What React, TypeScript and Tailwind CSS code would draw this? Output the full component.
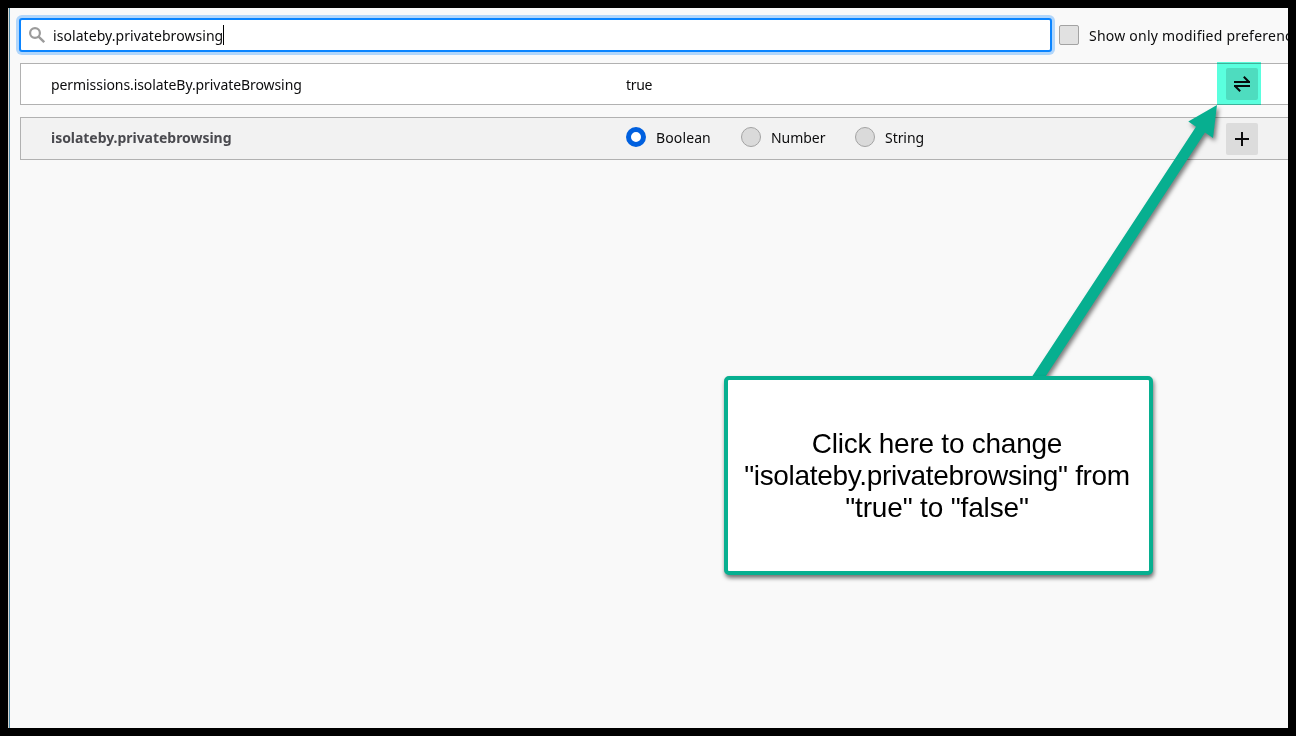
import React from "react";

const TYPES = [
  { label: "Boolean", checked: true, box: "w-[115px]", spacing: "tracking-[0.12px]" },
  { label: "Number", checked: false, box: "w-[114px]", spacing: "tracking-[-0.05px]" },
  { label: "String", checked: false, box: "w-[100px]", spacing: "tracking-[-0.05px]" },
];

function SearchIcon() {
  return (
    <svg className="h-4 w-4 shrink-0" viewBox="0 0 16 16" fill="none" stroke="#9b9b9b">
      <circle cx="6" cy="6" r="4.9" strokeWidth="2.2" />
      <path d="M9.6 9.6 15.2 15.2" strokeWidth="2.4" />
    </svg>
  );
}

function ToggleIcon() {
  return (
    <svg className="h-4 w-4" viewBox="0 0 16 16" fill="none" stroke="#0c0c0d" strokeWidth="2">
      <path d="M0 6H16M9.8 0.8 15 6M16 10H0M6.2 15.2 1 10" />
    </svg>
  );
}

function PlusIcon() {
  return (
    <svg className="h-4 w-4" viewBox="0 0 16 16" fill="none" stroke="#0c0c0d" strokeWidth="2">
      <path d="M1 8H15M8 1V15" />
    </svg>
  );
}

function Radio({ checked }: { checked: boolean }) {
  return checked ? (
    <span className="h-5 w-5 shrink-0 rounded-full border-[5px] border-[#0060df] bg-white" />
  ) : (
    <span className="h-5 w-5 shrink-0 rounded-full border border-[#a3a3a3] bg-[#dadada]" />
  );
}

export default function App() {
  return (
    <div className="relative h-[736px] w-[1296px] overflow-hidden border-8 border-black bg-[#f9f9f9] font-['Noto_Sans',sans-serif] text-[14px] leading-5 text-[#0c0c0d]">
      <div className="flex h-full">
        <div className="w-px shrink-0 bg-[#d8d4cc]" />
        <div className="w-px shrink-0 bg-[#4b89a8]" />
        <main className="min-w-0 flex-1 overflow-hidden">
          <div className="flex items-start pt-[10px] pl-[9px]">
            <div className="flex h-[34px] w-[1033px] shrink-0 items-center rounded-[3px] border-2 border-[#0a84ff] bg-white pl-2 shadow-[0_0_0_3px_rgba(10,132,255,0.3)]">
              <SearchIcon />
              <span className="ml-2 pt-[2px] tracking-[0.065px] whitespace-nowrap">isolateby.privatebrowsing</span>
              <span className="h-5 w-px bg-black" />
            </div>
            <span className="mt-[7px] ml-[7px] h-5 w-5 shrink-0 rounded-[2px] border border-[#a3a3a3] bg-[#e1e1e1]" />
            <span className="mt-2 ml-[10px] tracking-[0.23px] whitespace-nowrap">Show only modified preferences</span>
          </div>

          <div className="mt-[11px] ml-[10px] flex h-[42px] items-center border-y border-l border-[#b1b1b1] bg-white">
            <span className="w-[575px] shrink-0 pt-[2px] pl-[30px] tracking-[-0.075px]">permissions.isolateBy.privateBrowsing</span>
            <span className="w-[630px] shrink-0 pt-[2px] pl-[30px] tracking-[-0.3px]">true</span>
            <button className="flex h-8 w-8 shrink-0 items-center justify-center rounded-[2px] bg-[#dcdcdc]">
              <ToggleIcon />
            </button>
          </div>

          <div className="mt-3 ml-[10px] flex h-[43px] items-center border-y border-l border-[#b1b1b1] bg-[#f2f2f2]">
            <span className="w-[605px] shrink-0 pb-[2px] pl-[30px] font-bold tracking-[-0.04px] text-[#4a4a4f]">isolateby.privatebrowsing</span>
            <div className="flex w-[600px] shrink-0 pb-[3px]">
              {TYPES.map((t) => (
                <label key={t.label} className={`flex h-5 items-center gap-[10px] ${t.box} ${t.spacing}`}>
                  <Radio checked={t.checked} />
                  <span className="pt-[2px]">{t.label}</span>
                </label>
              ))}
            </div>
            <button className="flex h-8 w-8 shrink-0 items-center justify-center rounded-[2px] bg-[#dcdcdc]">
              <PlusIcon />
            </button>
          </div>
        </main>
      </div>

      <div className="absolute top-[54px] left-[1209px] h-[43px] w-[44px] bg-[#5affde] mix-blend-multiply" />

      <svg
        className="absolute top-0 left-0 h-[720px] w-[1280px] drop-shadow-[2px_3px_2px_rgba(0,0,0,0.5)]"
        viewBox="8 8 1280 720"
      >
        <path d="M1217 105 1213 138 1205 132.6 1042 382H1028.5L1196 126.8 1188.3 121.6Z" fill="#07af90" />
      </svg>

      <div className="absolute top-[368px] left-[716px] flex h-[199px] w-[429px] items-center justify-center rounded-[5px] border-4 border-[#07af90] bg-white pr-[3px] text-center font-['Liberation_Sans',Arial,sans-serif] text-[28px] leading-8 text-black shadow-[1px_3px_4px_rgba(0,0,0,0.55)]">
        <p className="whitespace-nowrap">
          <span className="tracking-[-0.25px]">Click here to change</span>
          <br />
          <span className="tracking-[-0.32px]">"isolateby.privatebrowsing" from</span>
          <br />
          <span className="tracking-[-0.15px]">"true" to "false"</span>
        </p>
      </div>
    </div>
  );
}
